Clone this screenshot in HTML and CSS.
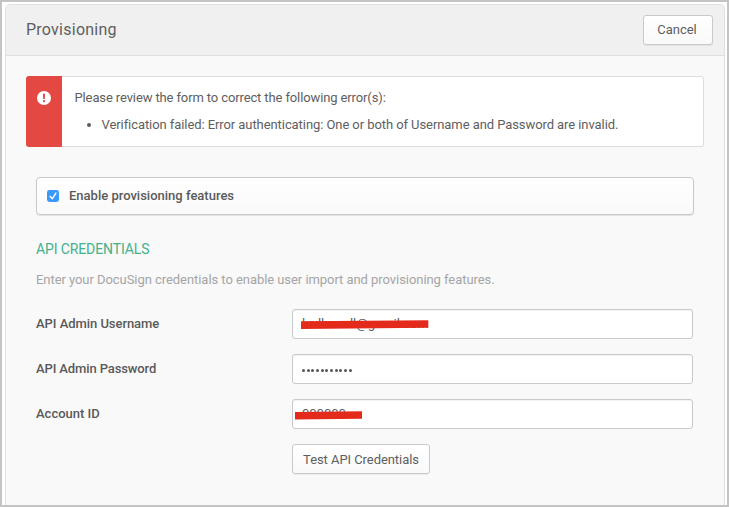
FILE: index.html
```html
<!DOCTYPE html>
<html lang="en">
<head>
<meta charset="utf-8">
<title>Provisioning</title>
<link rel="stylesheet" href="styles.css">
</head>
<body>
<main class="panel">
  <header class="panel-header">
    <h1 class="title">Provisioning</h1>
    <button class="button cancel" type="button"><span>Cancel</span></button>
  </header>
  <section class="alert">
    <div class="alert-icon">
      <svg width="14" height="14" viewBox="0 0 14 14"><circle cx="7" cy="7" r="7" fill="#fff"/><path d="M5.9 2.8h2.2l-.3 5.1H6.2z" fill="#e34843"/><circle cx="7" cy="10.2" r="1.15" fill="#e34843"/></svg>
    </div>
    <div class="alert-body">
      <p><span class="t-review">Please review the form to correct the following error(s):</span></p>
      <ul><li><span class="t-failed">Verification failed: Error authenticating: One or both of Username and Password are invalid.</span></li></ul>
    </div>
  </section>
  <form class="form">
    <label class="enable">
      <svg width="12" height="12" viewBox="0 0 12 12"><rect width="12" height="12" rx="2.4" fill="#3b99fc"/><path d="M3.2 6.4 5.2 8.8 8.9 3.1" fill="none" stroke="#fff" stroke-width="1.4" stroke-linecap="round" stroke-linejoin="round"/></svg>
      <span class="t-enable">Enable provisioning features</span>
    </label>
    <h2 class="section-title"><span>API CREDENTIALS</span></h2>
    <p class="hint"><span>Enter your DocuSign credentials to enable user import and provisioning features.</span></p>
    <div class="row">
      <span class="label t-user">API Admin Username</span>
      <div class="field"><span class="value-user">lxxllxxxxll@gmail.com</span>
        <svg class="mark mark-user" width="128" height="10" viewBox="0 0 128 10"><path d="M0 1.3 127.3.3v7.4L0 9z" fill="#e42a1b"/></svg>
      </div>
    </div>
    <div class="row">
      <span class="label t-pass">API Admin Password</span>
      <div class="field"><span class="dots"><i></i><i></i><i></i><i></i><i></i><i></i><i></i><i></i><i></i><i></i><i></i></span></div>
    </div>
    <div class="row">
      <span class="label t-account">Account ID</span>
      <div class="field"><span class="value-id">000000</span>
        <svg class="mark mark-id" width="68" height="9" viewBox="0 0 68 9"><path d="M0 1 67 .3v7.4L0 8.5z" fill="#e42a1b"/></svg>
      </div>
    </div>
    <button class="button test" type="button"><span>Test API Credentials</span></button>
  </form>
</main>
</body>
</html>
```
FILE: styles.css
```css
* { box-sizing: border-box; }
body {
  margin: 0;
  height: 507px;
  padding: 2px 3px 0 3px;
  border: 2px solid #c4c4c4;
  background: #fff;
  color: #5e5e5e;
  font: 13px/18px Roboto, "Liberation Sans", sans-serif;
  overflow: hidden;
}
h1, h2, p, ul { margin: 0; font-weight: 400; }
span { white-space: nowrap; }
.panel {
  width: 720px;
  height: 501px;
  border: 1px solid #e0e0e0;
  border-bottom: 0;
  border-radius: 5px 5px 0 0;
  background: #f9f9f9;
}
.panel-header {
  display: flex;
  justify-content: space-between;
  height: 51px;
  padding: 10px 11px 0 20px;
  border-bottom: 1px solid #e0e0e0;
  border-radius: 4px 4px 0 0;
  background: #f0f0f0;
}
.title { font-size: 16px; line-height: 30px; letter-spacing: .25px; }
.button {
  height: 30px;
  padding: 0;
  border: 1px solid #c9c9c9;
  border-radius: 3px;
  background: linear-gradient(#fff, #f9f9f9);
  box-shadow: 0 1px 1px rgba(0, 0, 0, .06);
  color: #5e5e5e;
  font: inherit;
}
.cancel { width: 70px; padding-right: 2px; }
.alert { display: flex; width: 678px; height: 71px; margin: 20px 0 0 20px; }
.alert-icon {
  width: 36px;
  padding: 15px 0 0 11px;
  border-radius: 3px 0 0 3px;
  background: #e34843;
}
.alert-icon svg { display: block; }
.alert-body {
  flex: 1;
  padding: 12px 0 0 12.5px;
  border: 1px solid #dedede;
  border-left: 0;
  border-radius: 0 3px 3px 0;
  background: #fff;
}
.alert-body ul { margin-top: 9px; padding-left: 27px; }
.t-review { letter-spacing: -.12px; }
.t-failed { letter-spacing: -.075px; }
.form { margin: 30px 0 0 30px; }
.enable {
  display: flex;
  align-items: center;
  gap: 10px;
  width: 658px;
  height: 38px;
  padding: 0 0 1px 10px;
  border: 1px solid #c9c9c9;
  border-radius: 4px;
  background: linear-gradient(#fff, #f9f9f9);
  box-shadow: 0 1px 1px rgba(0, 0, 0, .1);
}
.t-enable, .label { font-weight: 500; color: #5a5a5a; }
.section-title { margin-top: 25px; color: #43b18c; font-size: 14px; line-height: 18px; letter-spacing: -.12px; }
.hint { margin: 13px 0 20px; color: #a5a5a5; letter-spacing: -.055px; }
.row { display: flex; height: 30px; margin-bottom: 15px; }
.label { width: 256px; line-height: 30px; }
.t-user { letter-spacing: -.05px; }
.t-pass { letter-spacing: -.12px; }
.field {
  position: relative;
  width: 401px;
  padding-left: 9px;
  border: 1px solid #c9c9c9;
  border-radius: 3px;
  background: #fff;
  box-shadow: inset 0 1px 1px rgba(0, 0, 0, .05);
  line-height: 27px;
}
.value-user { letter-spacing: -.03px; }
.mark { position: absolute; }
.mark-user { left: 8px; top: 10px; }
.mark-id { left: 2px; top: 11px; }
.dots { display: flex; gap: 1.66px; height: 28px; padding-top: 2px; align-items: center; }
.dots i { width: 3px; height: 3px; border-radius: 50%; background: #555; }
.test { width: 138px; margin-left: 256px; letter-spacing: -.06px; line-height: 29px; }
```
